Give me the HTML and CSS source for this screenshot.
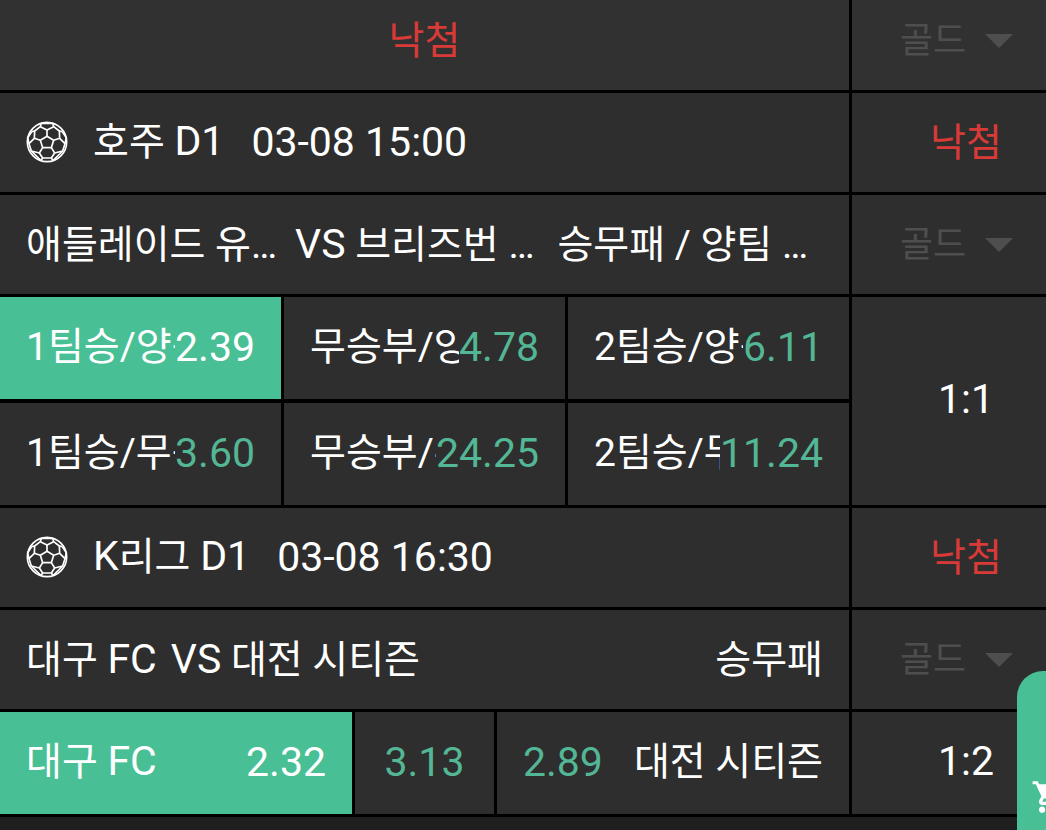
FILE: index.html
```html
<!DOCTYPE html>
<html lang="ko">
<head>
  <meta charset="UTF-8">
  <meta name="viewport" content="width=device-width, initial-scale=1.0">
  <title>구매내역</title>
  <link rel="stylesheet" href="styles.css">
</head>
<body>
  <!-- Shared icons -->
  <svg class="icon-defs" aria-hidden="true">
    <symbol id="icon-soccer" viewBox="0 0 126 126">
      <g fill="none" stroke="currentColor" stroke-width="5" stroke-linejoin="round">
        <circle cx="63" cy="63" r="59"/>
        <path d="M63 46 L83 58 L76 80 H50 L43 58 Z"/>
        <path d="M63 46 V27 M83 58 L101 52 M76 80 L86 96 M50 80 L40 96 M43 58 L25 52"/>
        <path d="M63 27 L43 17 L26 30 L25 52 L9 68 L16 90 L40 96 L50 111 H76 L86 96 L110 90 L117 68 L101 52 L100 30 L83 17 Z"/>
        <path d="M43 17 L46 7 H80 L83 17 M26 30 L17 32 M100 30 L109 32 M16 90 L45 119 M110 90 L81 119 M50 111 L45 119 M76 111 L81 119 M9 68 L5 50 L17 32 M117 68 L121 50 L109 32"/>
      </g>
    </symbol>
    <symbol id="icon-cart" viewBox="0 0 24 24">
      <path fill="currentColor" d="M7 18c-1.100 0-1.990.9-1.990 2S5.900 22 7 22s2-.9 2-2-.9-2-2-2zM1 2v2h2l3.600 7.590-1.350 2.450c-.16.28-.25.61-.25.96 0 1.100.9 2 2 2h12v-2H7.420c-.14 0-.25-.11-.25-.25l.03-.12.9-1.630h7.450c.75 0 1.410-.41 1.750-1.030l3.580-6.490A1 1 0 0 0 20 4H5.210l-.94-2H1zm16 16c-1.100 0-1.990.9-1.990 2s.89 2 1.990 2 2-.9 2-2-.9-2-2-2z"/>
    </symbol>
  </svg>

  <main class="bet-list">
    <div class="row row-first">
      <div class="main-cell result lose">낙첨</div>
      <div class="side-cell grade">
        <select class="grade-select" aria-label="등급" disabled><option>골드</option></select>
        <span class="arrow"></span>
      </div>
    </div>

    <!-- Australia D1 -->
    <div class="row">
      <div class="main-cell league">
        <svg class="ball"><use href="#icon-soccer"/></svg>
        <span>호주 <span class="latin">D1</span></span>
        <time class="num">03-08 15:00</time>
      </div>
      <div class="side-cell lose">낙첨</div>
    </div>
    <div class="row">
      <div class="main-cell match">
        <div class="teams">
          <span class="home">애들레이드 유나이티드</span>
          <span class="away"><span class="latin">VS</span> 브리즈번 로어</span>
        </div>
        <span class="market">승무패 / 양팀 득점</span>
      </div>
      <div class="side-cell grade">
        <select class="grade-select" aria-label="등급" disabled><option>골드</option></select>
        <span class="arrow"></span>
      </div>
    </div>
    <div class="row">
      <div class="odds-grid three-way">
        <button class="odd selected"><span class="name">1팀승/양득점</span><span class="num">2.39</span></button>
        <button class="odd"><span class="name">무승부/양득점</span><span class="num">4.78</span></button>
        <button class="odd"><span class="name">2팀승/양득점</span><span class="num">6.11</span></button>
        <button class="odd"><span class="name">1팀승/무득점</span><span class="num">3.60</span></button>
        <button class="odd"><span class="name">무승부/무득점</span><span class="num">24.25</span></button>
        <button class="odd"><span class="name">2팀승/무득점</span><span class="num">11.24</span></button>
      </div>
      <div class="side-cell score num">1:1</div>
    </div>

    <!-- K League D1 -->
    <div class="row">
      <div class="main-cell league">
        <svg class="ball"><use href="#icon-soccer"/></svg>
        <span><span class="latin">K</span>리그 <span class="latin">D1</span></span>
        <time class="num">03-08 16:30</time>
      </div>
      <div class="side-cell lose">낙첨</div>
    </div>
    <div class="row">
      <div class="main-cell match">
        <div class="teams">
          <span class="home">대구 <span class="latin">FC</span></span>
          <span class="away"><span class="latin">VS</span> 대전 시티즌</span>
        </div>
        <span class="market">승무패</span>
      </div>
      <div class="side-cell grade">
        <select class="grade-select" aria-label="등급" disabled><option>골드</option></select>
        <span class="arrow"></span>
      </div>
    </div>
    <div class="row">
      <div class="odds-grid win-draw-lose">
        <button class="odd selected"><span class="name">대구 <span class="latin">FC</span></span><span class="num">2.32</span></button>
        <button class="odd draw"><span class="num">3.13</span></button>
        <button class="odd"><span class="num">2.89</span><span class="name">대전 시티즌</span></button>
      </div>
      <div class="side-cell score num">1:2</div>
    </div>
  </main>

  <button class="cart-tab" aria-label="카트">
    <svg class="cart"><use href="#icon-cart"/></svg>
  </button>
</body>
</html>
```
FILE: styles.css
```css
:root {
  --bg: #1f1f1f;
  --cell: #2e2e2e;
  --line: #000;
  --green: #49bf95;
  --odds: #53b694;
  --red: #d83a38;
  --muted: #4e4e4e;
}

* {
  box-sizing: border-box;
}

body {
  margin: 0;
  overflow: hidden;
  background: var(--bg);
  color: #fff;
  font-family: Roboto, "Noto Sans CJK KR", sans-serif;
  font-size: 39px;
  line-height: 48px;
}

button,
select {
  font: inherit;
  color: inherit;
  border: 0;
  border-radius: 0;
  margin: 0;
}

.icon-defs {
  position: absolute;
  width: 0;
  height: 0;
}

.bet-list {
  display: flex;
  flex-direction: column;
  gap: 3px;
  margin-top: -9px;
  padding-bottom: 3px;
  background: var(--line);
}

.row {
  display: grid;
  grid-template-columns: minmax(0, 1fr) 194px;
  gap: 3px;
  min-height: 99px;
}

.main-cell,
.side-cell,
.odd {
  display: flex;
  align-items: center;
  background: var(--cell);
  padding: 0 26px;
  white-space: nowrap;
}

.side-cell {
  justify-content: center;
  padding-left: 34px;
  padding-right: 0;
}

.row-first .main-cell,
.row-first .side-cell {
  background: #313131;
}

.result {
  justify-content: center;
}

.lose {
  color: var(--red);
}

.num,
.latin {
  font-size: 41px;
}

.latin {
  line-height: 1;
}

.score {
  padding-bottom: 4px;
}

.grade {
  justify-content: space-between;
  padding-left: 48px;
  padding-right: 33px;
}

.grade-select {
  appearance: none;
  background: none;
  color: var(--muted);
  font-size: 36px;
  opacity: 1;
  padding: 0;
}

.arrow {
  border: 14px solid transparent;
  border-top-color: var(--muted);
  border-bottom: 0;
}

.league {
  padding-bottom: 2px;
}

.league .ball {
  width: 42px;
  height: 42px;
  margin-right: 25px;
}

.league .num {
  margin-left: 27px;
}

.teams {
  display: flex;
  flex: 1;
  min-width: 0;
}

.home,
.away,
.market {
  overflow: hidden;
  text-overflow: ellipsis;
}

.home {
  flex: none;
  max-width: 48%;
}

.away {
  padding-left: 14px;
}

.market {
  max-width: 33.33%;
}

.odds-grid {
  display: grid;
  gap: 4px 3px;
}

.three-way {
  grid-template-columns: repeat(3, minmax(0, 1fr));
}

.win-draw-lose {
  grid-template-columns: 38fr 15fr 38fr;
}

.odd {
  justify-content: space-between;
  min-height: 102px;
  padding-bottom: 2px;
  cursor: pointer;
}

.odd .name {
  min-width: 0;
  overflow: hidden;
}

.odd .num {
  flex: none;
  color: var(--odds);
}

.odd.draw {
  justify-content: center;
}

.odd.selected {
  background: var(--green);
}

.odd.selected .num {
  color: #fff;
}

.cart-tab {
  position: fixed;
  right: -71px;
  bottom: -41px;
  width: 100px;
  height: 200px;
  padding: 0 0 0 14px;
  border-radius: 26px;
  background: var(--green);
  color: #fff;
  text-align: left;
}

.cart {
  display: block;
  width: 38px;
  height: 38px;
  margin-top: 52px;
}
```
